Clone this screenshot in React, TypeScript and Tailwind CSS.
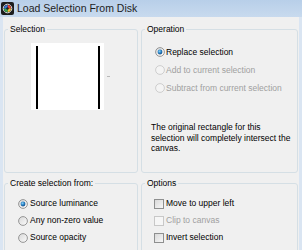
import React from 'react';

// Load Selection From Disk dialog

function Radio({ checked = false, disabled = false }: { checked?: boolean; disabled?: boolean }) {
  return (
    <svg width="10" height="10" viewBox="0 0 10 10" className="shrink-0">
      <defs>
        <linearGradient id="rfill" x1="0" y1="0" x2="1" y2="1">
          <stop offset="0" stopColor="#d8d8d8" />
          <stop offset="1" stopColor="#fbfbfb" />
        </linearGradient>
        <radialGradient id="rdot" cx="0.4" cy="0.35" r="0.7">
          <stop offset="0" stopColor="#8fd0f5" />
          <stop offset="0.5" stopColor="#2a86c8" />
          <stop offset="1" stopColor="#0d3f7a" />
        </radialGradient>
      </defs>
      <circle
        cx="5"
        cy="5"
        r="4.4"
        fill={disabled ? '#f4f4f4' : 'url(#rfill)'}
        stroke={disabled ? '#c9c9c9' : '#8c8c8c'}
        strokeWidth="0.9"
      />
      {checked && <circle cx="5" cy="5" r="2.4" fill="url(#rdot)" />}
    </svg>
  );
}

function Check({ disabled = false }: { disabled?: boolean }) {
  return (
    <div
      className={`w-[10px] h-[10px] shrink-0 border ${
        disabled ? 'border-[#c8c8c8] bg-[#f6f6f6]' : 'border-[#8e8f8f] bg-gradient-to-br from-[#d9d9d9] to-[#f7f7f7]'
      }`}
    />
  );
}

function Legend({ children }: { children: React.ReactNode }) {
  return <legend className="ml-[3px] px-[2px] leading-[12px] text-black">{children}</legend>;
}

export default function App() {
  return (
    <div className="w-[302px] h-[250px] overflow-hidden bg-[#dae5f2] font-['Liberation_Sans',Arial,sans-serif] text-[8.5px] text-black">
      {/* Title bar */}
      <div className="h-[17px] flex items-center gap-[3px] pl-[1px] bg-gradient-to-b from-[#b8cfe9] to-[#c8daee]">
        <svg width="13" height="13" viewBox="0 0 13 13">
          <rect x="0" y="0" width="13" height="13" rx="2" fill="#1d1d1d" />
          <circle cx="6.5" cy="6.5" r="4.3" fill="none" stroke="#e0e0e0" strokeWidth="1" />
          <path d="M6.5 3 A3.5 3.5 0 0 1 10 6.5 L6.5 6.5 Z" fill="#e5413a" />
          <path d="M10 6.5 A3.5 3.5 0 0 1 6.5 10 L6.5 6.5 Z" fill="#f2c230" />
          <path d="M6.5 10 A3.5 3.5 0 0 1 3 6.5 L6.5 6.5 Z" fill="#35a853" />
          <path d="M3 6.5 A3.5 3.5 0 0 1 6.5 3 L6.5 6.5 Z" fill="#3578d8" />
          <circle cx="6.5" cy="6.5" r="1.2" fill="#1d1d1d" />
        </svg>
        <span className="text-[10.5px] leading-none text-[#1e1e1e]">Load Selection From Disk</span>
      </div>

      {/* Body */}
      <div className="mx-[3px] h-[233px] bg-[#f0f0f0] pl-[1px] pt-[6px]">
        <div className="grid grid-cols-[134px_157px] gap-x-[3px] gap-y-[4px]">
          {/* Selection */}
          <fieldset className="h-[150px] border border-[#d5dfe5] rounded-[3px]">
            <Legend>Selection</Legend>
            <div className="flex items-center gap-[3px] ml-[26px] mt-[8px]">
              <div className="w-[73px] h-[67px] bg-white pl-[5px] pt-[3px]">
                <div className="w-[64px] h-[63px] border-x-2 border-black" />
              </div>
              <div className="w-[3px] h-[1px] bg-[#b8b8b8]" />
            </div>
          </fieldset>

          {/* Operation */}
          <fieldset className="h-[150px] border border-[#d5dfe5] rounded-[3px]">
            <Legend>Operation</Legend>
            <div className="pl-[13px] mt-[8px]">
              <div className="flex items-center gap-[1px] h-[18px]">
                <Radio checked />
                <span>Replace selection</span>
              </div>
              <div className="flex items-center gap-[1px] h-[18px] text-[#a0a0a0]">
                <Radio disabled />
                <span>Add to current selection</span>
              </div>
              <div className="flex items-center gap-[1px] h-[18px] text-[#a0a0a0]">
                <Radio disabled />
                <span>Subtract from current selection</span>
              </div>
            </div>
            <p className="pl-[9px] mt-[25px] leading-[10.5px]">
              The original rectangle for this
              <br />
              selection will completely intersect the
              <br />
              canvas.
            </p>
          </fieldset>

          {/* Create selection from */}
          <fieldset className="h-[90px] border border-[#d5dfe5] rounded-[3px]">
            <Legend>Create selection from:</Legend>
            <div className="pl-[13px] mt-[6px]">
              <div className="flex items-center gap-[2px] h-[17px]">
                <Radio checked />
                <span>Source luminance</span>
              </div>
              <div className="flex items-center gap-[2px] h-[17px]">
                <Radio />
                <span>Any non-zero value</span>
              </div>
              <div className="flex items-center gap-[2px] h-[17px]">
                <Radio />
                <span>Source opacity</span>
              </div>
            </div>
          </fieldset>

          {/* Options */}
          <fieldset className="h-[90px] border border-[#d5dfe5] rounded-[3px]">
            <Legend>Options</Legend>
            <div className="pl-[12px] mt-[6px]">
              <div className="flex items-center gap-[2px] h-[17px]">
                <Check />
                <span>Move to upper left</span>
              </div>
              <div className="flex items-center gap-[2px] h-[17px] text-[#a0a0a0]">
                <Check disabled />
                <span>Clip to canvas</span>
              </div>
              <div className="flex items-center gap-[2px] h-[17px]">
                <Check />
                <span>Invert selection</span>
              </div>
            </div>
          </fieldset>
        </div>
      </div>
    </div>
  );
}
